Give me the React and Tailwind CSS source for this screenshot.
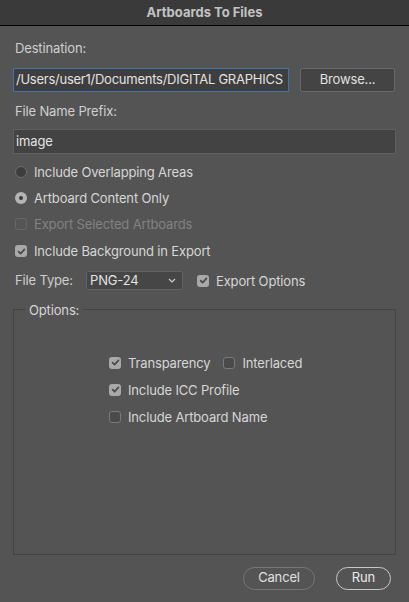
import React from "react";

const font = { fontFamily: "Inter, 'Noto Sans', sans-serif" };

const Check = ({ checked, disabled }) => {
  if (checked) {
    return (
      <span className="flex h-[12px] w-[12px] shrink-0 items-center justify-center rounded-[3px] bg-[#a9a9a9]">
        <svg width="9" height="9" viewBox="0 0 10 10" fill="none">
          <path d="M1.8 5.2 L4 7.4 L8.3 2.6" stroke="#4a4a4a" strokeWidth="1.9" strokeLinecap="round" strokeLinejoin="round" />
        </svg>
      </span>
    );
  }
  return (
    <span
      className={`h-[12px] w-[12px] shrink-0 rounded-[3px] border ${
        disabled ? "border-[#686868] bg-[#555555]" : "border-[#7a7a7a] bg-[#4a4a4a]"
      }`}
    />
  );
};

const Radio = ({ selected }) =>
  selected ? (
    <span className="flex h-[12px] w-[12px] shrink-0 items-center justify-center rounded-full bg-[#b4b4b4]">
      <span className="h-[4px] w-[4px] rounded-full bg-[#3a3a3a]" />
    </span>
  ) : (
    <span className="h-[12px] w-[12px] shrink-0 rounded-full border border-[#6e6e6e] bg-[#3d3d3d]" />
  );

const Option = ({ control, label, muted }) => (
  <div className="flex h-[16px] items-center gap-[7px]">
    {control}
    <span className={`text-[13px] leading-4 ${muted ? "text-[#828282]" : "text-[#d6d6d6]"}`}>{label}</span>
  </div>
);

export default function App() {
  return (
    <div className="flex h-[602px] w-[409px] flex-col overflow-hidden bg-[#545454] tracking-[-0.15px]" style={font}>
      <div className="flex h-[26px] shrink-0 items-center justify-center border-b border-black bg-[#3b3a3b]">
        <span className="text-[13px] font-bold tracking-normal text-[#c2c2c2]">Artboards To Files</span>
      </div>

      <div className="flex flex-col px-[13px] pt-[14px]">
        <div className="pl-[2px] text-[13px] leading-4 text-[#cfcfcf]">Destination:</div>

        <div className="mt-[12px] flex gap-[11px]">
          <div className="flex h-[24px] w-[276px] items-center overflow-hidden whitespace-nowrap border border-[#3f73ad] bg-[#3e3e3e] pl-[2px] text-[13px] tracking-[-0.25px] text-[#e2e2e2]">
            /Users/user1/Documents/DIGITAL GRAPHICS
          </div>
          <button className="flex h-[24px] w-[95px] items-center justify-center rounded-[2px] border border-[#686868] bg-[#444444] text-[13px] text-[#e0e0e0]">
            Browse...
          </button>
        </div>

        <div className="mt-[11px] pl-[2px] text-[13px] leading-4 text-[#cfcfcf]">File Name Prefix:</div>

        <div className="mt-[10px] flex h-[25px] items-center border border-[#5f5f5f] bg-[#434343] pl-[2px] text-[13px] text-[#e2e2e2]">
          image
        </div>

        <div className="mt-[10px] flex flex-col gap-[10px] pl-[2px]">
          <Option control={<Radio />} label="Include Overlapping Areas" />
          <Option control={<Radio selected />} label="Artboard Content Only" />
          <Option control={<Check disabled />} label="Export Selected Artboards" muted />
        </div>
        <div className="mt-[11px] pl-[2px]">
          <Option control={<Check checked />} label="Include Background in Export" />
        </div>

        <div className="mt-[12px] flex items-center pl-[2px]">
          <span className="w-[71px] text-[13px] text-[#cfcfcf]">File Type:</span>
          <div className="flex h-[19px] w-[97px] items-center justify-between rounded-[2px] border border-[#626262] bg-[#464646] pl-[3px] pr-[6px]">
            <span className="text-[13px] text-[#e2e2e2]">PNG-24</span>
            <svg width="8" height="5" viewBox="0 0 8 5" fill="none">
              <path d="M1 1 L4 4 L7 1" stroke="#cfcfcf" strokeWidth="1.1" />
            </svg>
          </div>
          <div className="ml-[14px]">
            <Option control={<Check checked />} label="Export Options" />
          </div>
        </div>

        <fieldset className="mt-[11px] border border-[#444444] pb-[129px]">
          <legend className="ml-[11px] px-[4px] text-[13px] leading-4 text-[#d6d6d6]">Options:</legend>
          <div className="mt-[37px] flex flex-col gap-[11px] pl-[95px]">
            <div className="flex items-center gap-[13px]">
              <Option control={<Check checked />} label="Transparency" />
              <Option control={<Check />} label="Interlaced" />
            </div>
            <Option control={<Check checked />} label="Include ICC Profile" />
            <Option control={<Check />} label="Include Artboard Name" />
          </div>
        </fieldset>

        <div className="mt-[12px] flex justify-end gap-[21px] pr-[5px]">
          <button className="flex h-[23px] w-[72px] items-center justify-center rounded-full border border-[#767676] text-[13px] text-[#e0e0e0]">
            Cancel
          </button>
          <button className="flex h-[23px] w-[55px] items-center justify-center rounded-full border border-[#c8c8c8] text-[13px] text-[#eaeaea]">
            Run
          </button>
        </div>
      </div>
    </div>
  );
}
